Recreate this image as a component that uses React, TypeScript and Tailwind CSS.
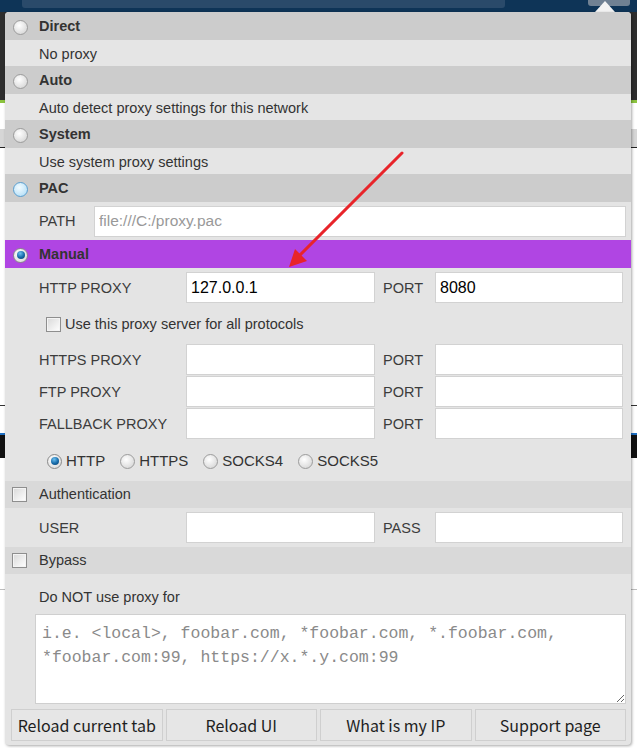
import React from "react";

const narrow = "font-['Liberation_Sans',Arial,sans-serif]";
const arial = "font-['Liberation_Sans',Arial,sans-serif]";

function Radio({ state }: { state: "off" | "hover" | "on" }) {
  if (state === "on") {
    return (
      <span className="flex h-[15px] w-[15px] shrink-0 items-center justify-center rounded-full border border-[#8a8a8a] bg-[radial-gradient(circle_at_40%_35%,#ffffff,#d4d4d4)]">
        <span className="h-[8px] w-[8px] rounded-full bg-[radial-gradient(circle_at_40%_30%,#6cc0f0,#1569a8_55%,#0b3f6a)]" />
      </span>
    );
  }
  if (state === "hover") {
    return (
      <span className="block h-[15px] w-[15px] shrink-0 rounded-full border border-[#5b9fd0] bg-[radial-gradient(circle_at_40%_35%,#f2fbff,#a9daf6)]" />
    );
  }
  return (
    <span className="block h-[15px] w-[15px] shrink-0 rounded-full border border-[#9c9c9c] bg-[radial-gradient(circle_at_40%_35%,#ffffff,#cfcfcf)]" />
  );
}

function Check() {
  return (
    <span className="block h-[15px] w-[15px] shrink-0 border border-[#8e8e8e] bg-[linear-gradient(135deg,#d8d8d8,#ffffff)] shadow-[inset_0_0_0_1px_#f4f4f4]" />
  );
}

function Header({ label, state, bg = "bg-[#cccccc]" }: { label: string; state: "off" | "hover" | "on"; bg?: string }) {
  return (
    <div className={`flex h-[28px] shrink-0 items-center pl-[8px] pt-[2px] ${bg}`}>
      <Radio state={state} />
      <span className={`ml-[11px] text-[14.5px] font-bold text-[#333] ${narrow}`}>{label}</span>
    </div>
  );
}

function Desc({ text }: { text: string }) {
  return (
    <div className={`flex h-[26px] shrink-0 items-center bg-[#e5e5e5] pl-[34px] pt-[3px] text-[14.5px] text-[#333] ${narrow}`}>
      {text}
    </div>
  );
}

function Field({ value, w }: { value?: string; w: string }) {
  return (
    <input
      readOnly
      value={value ?? ""}
      className={`h-[31px] ${w} shrink-0 border border-[#d2d2d2] bg-white pl-[4px] text-[16px] text-black outline-none ${arial}`}
    />
  );
}

function ProxyRow({ label, value, port, portLabel = "PORT", h = "h-[32px]" }: { label: string; value?: string; port?: string; portLabel?: string; h?: string }) {
  return (
    <div className={`flex ${h} shrink-0 items-center pl-[34px] text-[14.5px] text-[#3c3c3c] ${arial}`}>
      <span className="w-[147px] shrink-0 pt-[3px]">{label}</span>
      <Field value={value} w="w-[189px]" />
      <span className="ml-[8px] w-[52px] shrink-0 pt-[3px]">{portLabel}</span>
      <Field value={port} w="w-[188px]" />
    </div>
  );
}

function CheckHeader({ label }: { label: string }) {
  return (
    <div className={`flex h-[27px] shrink-0 items-center bg-[#d9d9d9] pl-[7px] text-[14.5px] text-[#333] ${arial}`}>
      <Check />
      <span className="ml-[12px] pt-[1px]">{label}</span>
    </div>
  );
}

export default function App() {
  const btn = "flex h-[32px] flex-1 items-center justify-center border border-[#cfcfcf] bg-[#e6e6e6] text-[16px] text-[#1e1e1e] font-['Noto_Sans_CJK_SC','Noto_Sans',sans-serif]";
  return (
    <div className="relative h-[748px] w-[637px] overflow-hidden bg-white">
      {/* background page */}
      <div className="flex h-[12px] items-start bg-[#0e3457]">
        <div className="ml-[22px] h-[8px] w-[483px] rounded-b-[3px] bg-[#2a4a6a]" />
        <div className="ml-auto mr-[7px] h-[6px] w-[42px] rounded-b-[3px] bg-[#708193]" />
      </div>
      <div className="h-[88px] bg-[#2d2d2d]" />
      <div className="h-[3px] bg-[#8cc43f]" />
      <div className="h-[26px]" />
      <div className="h-[18px] bg-[#d6d6d6]" />
      <div className="h-[258px] border-t border-[#222]" />
      <div className="h-[28px] border-t border-[#333]" />
      <div className="h-[25px] border-t-2 border-[#1d6fc4] bg-[#111]" />
      <div className="h-[132px] border-b border-[#bdbdbd]" />

      {/* popup arrow */}
      <div className="absolute left-[595px] top-[1px] h-0 w-0 border-x-[10px] border-b-[11px] border-x-transparent border-b-[#f4f4f4]" />

      {/* popup */}
      <div className="absolute left-[5px] top-[12px] flex h-[733px] w-[626px] flex-col overflow-hidden rounded-[4px] bg-[#e4e4e4] shadow-[1px_1px_3px_rgba(0,0,0,0.35)]">
        <Header label="Direct" state="off" />
        <Desc text="No proxy" />
        <Header label="Auto" state="off" />
        <Desc text="Auto detect proxy settings for this network" />
        <Header label="System" state="off" />
        <Desc text="Use system proxy settings" />
        <Header label="PAC" state="hover" />
        <div className={`flex h-[38px] shrink-0 items-center pl-[34px] pr-[5px] text-[14.5px] text-[#3c3c3c] ${arial}`}>
          <span className="w-[55px] shrink-0 pt-[2px]">PATH</span>
          <input
            readOnly
            placeholder="file:///C:/proxy.pac"
            className={`h-[31px] min-w-0 flex-1 border border-[#d2d2d2] bg-white pl-[4px] text-[15.5px] outline-none placeholder:text-[#999] ${arial}`}
          />
        </div>
        <Header label="Manual" state="on" bg="bg-[#b045e3]" />
        <div className="h-[4px] shrink-0" />
        <ProxyRow label="HTTP PROXY" value="127.0.0.1" port="8080" h="h-[31px]" />
        <div className={`flex h-[40px] shrink-0 items-center pl-[41px] pt-[3px] text-[14.5px] text-[#333] ${arial}`}>
          <Check />
          <span className="ml-[4px] pt-[1px]">Use this proxy server for all protocols</span>
        </div>
        <ProxyRow label="HTTPS PROXY" />
        <ProxyRow label="FTP PROXY" />
        <ProxyRow label="FALLBACK PROXY" />
        <div className={`flex h-[42px] shrink-0 items-center pl-[42px] pt-[2px] text-[15px] text-[#333] ${arial}`}>
          <Radio state="on" />
          <span className="ml-[4px]">HTTP</span>
          <span className="ml-[15px]"><Radio state="off" /></span>
          <span className="ml-[4px]">HTTPS</span>
          <span className="ml-[15px]"><Radio state="off" /></span>
          <span className="ml-[4px]">SOCKS4</span>
          <span className="ml-[15px]"><Radio state="off" /></span>
          <span className="ml-[4px]">SOCKS5</span>
        </div>
        <CheckHeader label="Authentication" />
        <ProxyRow label="USER" portLabel="PASS" h="h-[38px]" />
        <div className="h-px shrink-0" />
        <CheckHeader label="Bypass" />
        <div className={`flex h-[40px] shrink-0 items-center pl-[34px] pt-[7px] text-[14.5px] text-[#333] ${arial}`}>
          Do NOT use proxy for
        </div>
        <div className="flex shrink-0 pl-[30px] pr-[5px]">
          <textarea
            readOnly
            placeholder="i.e. <local>, foobar.com, *foobar.com, *.foobar.com, *foobar.com:99, https://x.*.y.com:99"
            className="h-[90px] w-full resize border border-[#cfcfcf] bg-white px-[6px] py-[7px] text-[16.5px] leading-[24px] outline-none placeholder:text-[#8a8a8a] font-['Liberation_Mono',monospace]"
          />
        </div>
        <div className="mt-[5px] flex shrink-0 gap-[3px] pl-[6px] pr-[5px]">
          <div className={btn}>Reload current tab</div>
          <div className={btn}>Reload UI</div>
          <div className={btn}>What is my IP</div>
          <div className={btn}>Support page</div>
        </div>
      </div>

      {/* red annotation arrow */}
      <svg className="absolute left-0 top-0" width="637" height="748" viewBox="0 0 637 748">
        <line x1="402" y1="153" x2="297" y2="258" stroke="#e8242a" strokeWidth="3" strokeLinecap="round" />
        <polygon points="289,267 295,249 307,261" fill="#e8242a" />
      </svg>
    </div>
  );
}
